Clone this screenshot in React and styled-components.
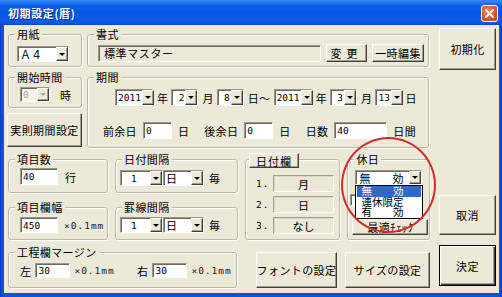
import React from 'react';
import styled, { css, createGlobalStyle } from 'styled-components';

const FACE = '#ECE9D8';
const MONO = `'DejaVu Sans Mono', 'Liberation Mono', monospace`;

const GlobalStyle = createGlobalStyle`
  * {
    margin: 0;
    padding: 0;
    box-sizing: border-box;
  }
  html, body {
    width: 502px;
    height: 297px;
    overflow: hidden;
    background: #fff;
  }
  body {
    font-family: 'Noto Sans CJK JP', 'Noto Sans', sans-serif;
    font-size: 11px;
    color: #000;
  }
`;

const raised = css`
  background: ${FACE};
  border: 1px solid;
  border-color: #fff #404040 #404040 #fff;
  box-shadow: inset -1px -1px 0 #a19e8c;
`;

const sunken = css`
  border: 1px solid;
  border-color: #9a978a #fff #fff #9a978a;
  box-shadow: inset 1px 1px 0 #6c6a60;
`;

const Window = styled.div`
  position: relative;
  width: 502px;
  height: 297px;
  display: flex;
  flex-direction: column;
  background: linear-gradient(to right, #0837c4, #0a52e0 2px, #0a52e0 calc(100% - 2px), #0837c4);
`;

const TitleBar = styled.div`
  height: 25px;
  flex: none;
  display: flex;
  align-items: center;
  justify-content: space-between;
  padding: 0 4px 0 8px;
  background: linear-gradient(
    to bottom,
    #3a8cf8 0%,
    #2a7cf5 8%,
    #0c5ee8 22%,
    #0855e2 50%,
    #0a5ae8 80%,
    #0a57e2 92%,
    #0745cc 100%
  );
`;

const Title = styled.div`
  color: #fff;
  font-weight: bold;
  font-size: 11px;
  letter-spacing: 0.6px;
  text-shadow: 1px 1px 0 #0a2a8a;
`;

const CloseButton = styled.div`
  width: 17px;
  height: 17px;
  margin-top: 1px;
  border: 1px solid #fff;
  border-radius: 3px;
  background: radial-gradient(circle at 40% 35%, #f08a64, #d9532c 60%, #c13e1c);
  display: flex;
  align-items: center;
  justify-content: center;
`;

const Client = styled.div`
  flex: 1;
  display: flex;
  gap: 9px;
  margin: 0 3px 4px 4px;
  padding: 3px 3px 0 4px;
  background: ${FACE};
`;

const Main = styled.div`
  width: 422px;
  display: flex;
  flex-direction: column;
`;

const Side = styled.div`
  width: 57px;
  display: flex;
  flex-direction: column;
`;

const Row = styled.div`
  display: flex;
  align-items: flex-start;
  gap: ${(p) => p.$gap || 0}px;
  margin-top: ${(p) => p.$mt || 0}px;
`;

const Col = styled.div`
  width: ${(p) => p.$w}px;
  display: flex;
  flex-direction: column;
`;

const Box = styled.div`
  width: ${(p) => p.$w}px;
  height: ${(p) => p.$h}px;
  margin-top: ${(p) => (p.$mt === undefined ? 6 : p.$mt)}px;
  border: 1px solid #bdb9a6;
  border-radius: 3px;
  box-shadow: inset 1px 1px 0 #fff, 1px 1px 0 #fff;
  display: flex;
  flex-direction: column;
  align-items: flex-start;
`;

const Caption = styled.div`
  margin: -7px 0 0 6px;
  padding: 0 2px;
  height: 12px;
  line-height: 12px;
  background: ${FACE};
  letter-spacing: 0.4px;
  white-space: nowrap;
`;

const CaptionButton = styled.div`
  ${raised};
  margin: -7px 0 0 3px;
  width: 50px;
  height: 15px;
  display: flex;
  align-items: center;
  justify-content: center;
  letter-spacing: 1px;
`;

const Body = styled.div`
  display: flex;
  flex-direction: column;
  align-items: flex-start;
  gap: ${(p) => p.$gap || 0}px;
  padding: ${(p) => p.$pt || 0}px 0 0 ${(p) => p.$pl || 0}px;
`;

const Line = styled.div`
  display: flex;
  align-items: center;
  gap: ${(p) => p.$gap || 0}px;
  margin: ${(p) => p.$mt || 0}px 0 0 ${(p) => p.$ml || 0}px;
  width: ${(p) => (p.$w ? `${p.$w}px` : 'auto')};
`;

const Unit = styled.span`
  line-height: 12px;
  letter-spacing: ${(p) => (p.$ls === undefined ? 0.4 : p.$ls)}px;
  white-space: nowrap;
  margin-left: ${(p) => p.$ml || 0}px;
`;

const Scale = styled.span`
  font-family: ${MONO};
  font-size: 9.5px;
  letter-spacing: 1px;
  color: #222;
  margin-left: ${(p) => p.$ml || 0}px;
  white-space: nowrap;
`;

const TextBox = styled.div`
  ${sunken};
  width: ${(p) => p.$w}px;
  height: ${(p) => p.$h || 17}px;
  background: ${(p) => (p.$ro ? FACE : '#fff')};
  display: flex;
  align-items: center;
  padding-left: ${(p) => (p.$jp ? 5 : 2)}px;
  font-family: ${(p) => (p.$jp ? 'inherit' : MONO)};
  font-size: ${(p) => (p.$jp ? 11 : 9.5)}px;
  letter-spacing: ${(p) => (p.$jp ? 0.6 : 0)}px;
  white-space: nowrap;
`;

const ComboWrap = styled.div`
  position: relative;
`;

const ComboBox = styled.div`
  ${sunken};
  width: ${(p) => p.$w}px;
  height: ${(p) => p.$h}px;
  background: ${(p) => (p.$off ? '#f5f4ef' : '#fff')};
  display: flex;
  align-items: stretch;
`;

const ComboValue = styled.div`
  flex: 1;
  display: flex;
  align-items: center;
  justify-content: ${(p) => (p.$right ? 'flex-end' : 'flex-start')};
  padding: 0 1px 0 ${(p) => p.$pl || 2}px;
  font-family: ${(p) => (p.$jp ? 'inherit' : MONO)};
  font-size: ${(p) => (p.$jp ? 11 : 9.5)}px;
  color: ${(p) => (p.$off ? '#aca899' : '#000')};
  white-space: pre;
`;

const DropBtn = styled.div`
  ${raised};
  width: 12px;
  flex: none;
  display: flex;
  align-items: center;
  justify-content: center;
  &::after {
    content: '';
    border-left: 3px solid transparent;
    border-right: 3px solid transparent;
    border-top: 3px solid ${(p) => (p.$off ? '#aca899' : '#000')};
  }
`;

const Button = styled.div`
  ${raised};
  width: ${(p) => p.$w}px;
  height: ${(p) => p.$h}px;
  margin: ${(p) => p.$mt || 0}px 0 0 ${(p) => p.$ml || 0}px;
  flex: none;
  display: flex;
  align-items: center;
  justify-content: center;
  letter-spacing: ${(p) => (p.$ls === undefined ? 0.4 : p.$ls)}px;
  white-space: nowrap;
  ${(p) =>
    p.$default &&
    css`
      border-color: #000;
      box-shadow: inset 1px 1px 0 #fff, inset -1px -1px 0 #404040, inset -2px -2px 0 #a19e8c;
    `}
`;

const DateLabel = styled.span`
  width: 17px;
  font-family: ${MONO};
  font-size: 9.5px;
  letter-spacing: 1px;
`;

const DateCell = styled.div`
  width: 61px;
  height: 17px;
  border: 1px solid;
  border-color: #a3a090 #fff #fff #a3a090;
  box-shadow: inset 1px 1px 0 #d9d6c6;
  display: flex;
  align-items: center;
  justify-content: center;
`;

const Check = styled.div`
  ${sunken};
  width: 12px;
  height: 12px;
  margin: 9px 0 0 -5px;
  background: #fff;
`;

const DropList = styled.div`
  position: absolute;
  top: 100%;
  left: 0;
  width: 68px;
  border: 1px solid #000;
  background: #fff;
  z-index: 2;
`;

const ListItem = styled.div`
  height: 10.5px;
  line-height: 10.5px;
  font-size: 10.5px;
  padding-left: 4px;
  white-space: pre;
  background: ${(p) => (p.$sel ? '#316ac5' : 'transparent')};
  color: ${(p) => (p.$sel ? '#fff' : '#000')};
  margin: 0 1px;
`;

const Ring = styled.div`
  position: absolute;
  left: 341px;
  top: 137px;
  width: 95px;
  height: 96px;
  border: 2px solid #d42b2b;
  border-radius: 50%;
  pointer-events: none;
  z-index: 3;
`;

const Group = ({ caption, w, h, mt, pt, pl, gap, children }) => (
  <Box $w={w} $h={h} $mt={mt}>
    <Caption>{caption}</Caption>
    <Body $pt={pt} $pl={pl} $gap={gap}>
      {children}
    </Body>
  </Box>
);

const Combo = ({ w, h = 16, value, jp, right, pl, off }) => (
  <ComboBox $w={w} $h={h} $off={off}>
    <ComboValue $jp={jp} $right={right} $pl={pl} $off={off}>
      {value}
    </ComboValue>
    <DropBtn $off={off} />
  </ComboBox>
);

const periodDate = [
  { v: '2011', w: 38, u: '年' },
  { v: '2', w: 27, u: '月' },
  { v: '8', w: 27, u: '日～' },
  { v: '2011', w: 38, u: '年' },
  { v: '3', w: 27, u: '月' },
  { v: '13', w: 26, u: '日' },
];

const margins = [
  { label: '前余日', value: '0', w: 29, unit: '日' },
  { label: '後余日', value: '0', w: 29, unit: '日' },
  { label: '日数', value: '40', w: 53, unit: '日間' },
];

const App = () => (
  <>
    <GlobalStyle />
    <Window>
      <TitleBar>
        <Title>初期設定(暦)</Title>
        <CloseButton>
          <svg width="9" height="9" viewBox="0 0 9 9">
            <path d="M1 1 L8 8 M8 1 L1 8" stroke="#fff" strokeWidth="1.8" strokeLinecap="round" />
          </svg>
        </CloseButton>
      </TitleBar>

      <Client>
        <Main>
          <Row $gap={5}>
            <Group caption="用紙" w={74} h={33} pt={6} pl={8}>
              <Combo w={52} value="Ａ４" jp pl={2} />
            </Group>
            <Group caption="書式" w={342} h={33} pt={4} pl={10}>
              <Line>
                <TextBox $w={223} $ro $jp>標準マスター</TextBox>
                <Button $w={41} $h={18} $ml={5} $ls={5}>変更</Button>
                <Button $w={52} $h={18} $ml={5}>一時編集</Button>
              </Line>
            </Group>
          </Row>

          <Row $gap={5} $mt={4}>
            <Col $w={74}>
              <Group caption="開始時間" w={74} h={31} pt={4} pl={11}>
                <Line>
                  <Combo w={30} h={15} value="0" off />
                  <Unit $ml={10}>時</Unit>
                </Line>
              </Group>
              <Button $w={75} $h={34} $mt={5} $ml={-1}>実則期間設定</Button>
            </Col>
            <Group caption="期間" w={342} h={71} pt={6}>
              <Line $gap={3} $ml={27}>
                {periodDate.map((d, i) => (
                  <Line key={i} $gap={4}>
                    <Combo w={d.w} h={17} value={d.v} right />
                    <Unit>{d.u}</Unit>
                  </Line>
                ))}
              </Line>
              <Line $gap={15} $ml={15} $mt={16}>
                {margins.map((m) => (
                  <Line key={m.label} $gap={6}>
                    <Unit $ls={0.3}>{m.label}</Unit>
                    <TextBox $w={m.w}>{m.value}</TextBox>
                    <Unit>{m.unit}</Unit>
                  </Line>
                ))}
              </Line>
            </Group>
          </Row>

          <Row $gap={7} $mt={5}>
            <Col $w={100}>
              <Group caption="項目数" w={100} h={34} pt={3} pl={11}>
                <Line>
                  <TextBox $w={38}>40</TextBox>
                  <Unit $ml={7}>行</Unit>
                </Line>
              </Group>
              <Group caption="項目欄幅" w={100} h={33} mt={14} pt={4} pl={11}>
                <Line>
                  <TextBox $w={38} $h={16}>450</TextBox>
                  <Scale $ml={6}>×0.1mm</Scale>
                </Line>
              </Group>
            </Col>
            <Col $w={123}>
              <Group caption="日付間隔" w={123} h={34} pt={5} pl={4}>
                <Line>
                  <Combo w={43} value="1" pl={10} />
                  <Combo w={41} value="日" jp pl={2} />
                  <Unit $ml={5}>毎</Unit>
                </Line>
              </Group>
              <Group caption="罫線間隔" w={123} h={33} mt={14} pt={4} pl={4}>
                <Line>
                  <Combo w={43} value="1" pl={10} />
                  <Combo w={41} value="日" jp pl={2} />
                  <Unit $ml={5}>毎</Unit>
                </Line>
              </Group>
            </Col>
            <Box $w={96} $h={81}>
              <CaptionButton>日付欄</CaptionButton>
              <Body $pt={7} $pl={10} $gap={4}>
                {['月', '日', 'なし'].map((t, i) => (
                  <Line key={t}>
                    <DateLabel>{i + 1}.</DateLabel>
                    <DateCell>{t}</DateCell>
                  </Line>
                ))}
              </Body>
            </Box>
            <Group caption="休日" w={83} h={81} pt={5} pl={7}>
              <ComboWrap>
                <Combo w={67} h={15} value="無　　効" jp pl={3} />
                <DropList>
                  <ListItem $sel>無　　効</ListItem>
                  <ListItem>連休限定</ListItem>
                  <ListItem>有　　効</ListItem>
                </DropList>
              </ComboWrap>
              <Check />
              <Button $w={76} $h={16} $mt={13} $ml={-3}>最適ﾁｪｯｸ</Button>
            </Group>
          </Row>

          <Row $mt={6}>
            <Group caption="工程欄マージン" w={229} h={36} pt={5} pl={11}>
              <Line>
                <Line $w={117} $gap={4}>
                  <Unit>左</Unit>
                  <TextBox $w={35} $h={15}>30</TextBox>
                  <Scale>×0.1mm</Scale>
                </Line>
                <Line $gap={4}>
                  <Unit>右</Unit>
                  <TextBox $w={35} $h={15}>30</TextBox>
                  <Scale>×0.1mm</Scale>
                </Line>
              </Line>
            </Group>
            <Button $w={81} $h={36} $mt={6} $ml={19}>フォントの設定</Button>
            <Button $w={85} $h={36} $mt={6} $ml={8}>サイズの設定</Button>
          </Row>
        </Main>

        <Side>
          <Button $w={57} $h={42}>初期化</Button>
          <Button $w={57} $h={40} $mt={125}>取消</Button>
          <Button $w={57} $h={41} $mt={10} $default>決定</Button>
        </Side>
      </Client>

      <Ring />
    </Window>
  </>
);

export default App;
